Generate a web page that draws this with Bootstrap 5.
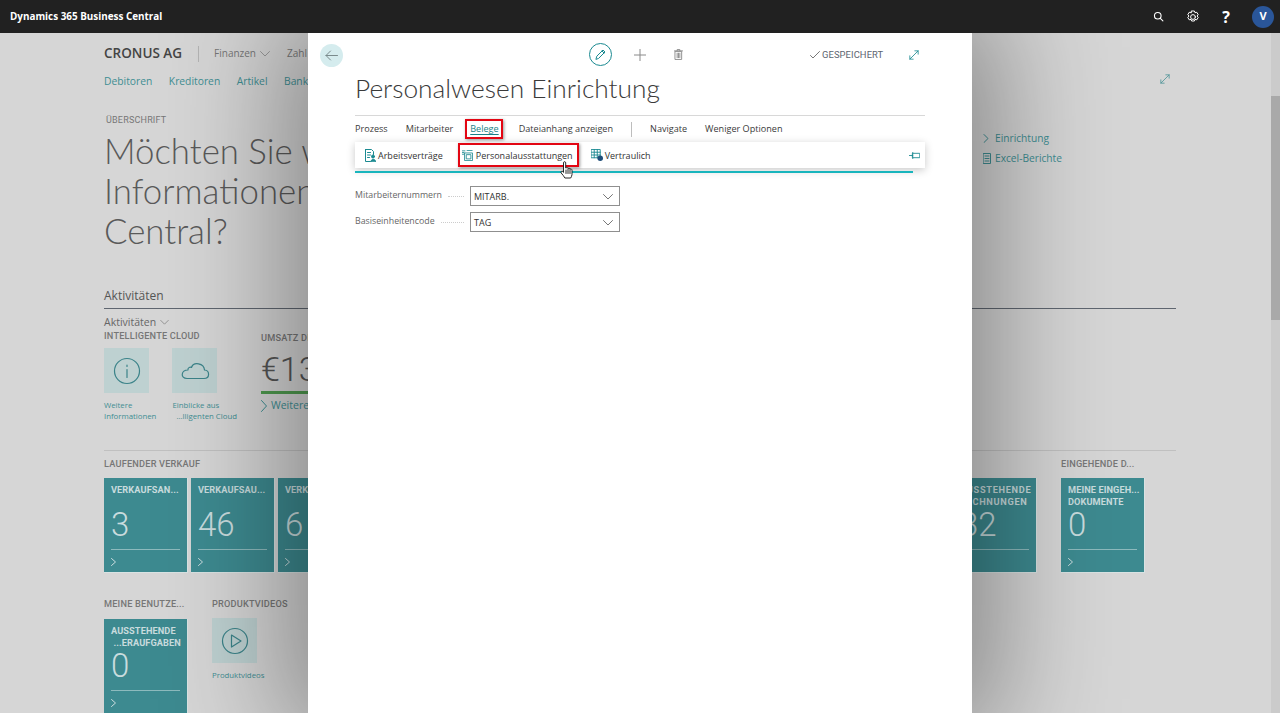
<!DOCTYPE html>
<html lang="de">
<head>
  <meta charset="UTF-8">
  <title>Personalwesen Einrichtung</title>
  <meta name="viewport" content="width=device-width, initial-scale=1">
  <link href="https://cdn.jsdelivr.net/npm/bootstrap@5.3.0/dist/css/bootstrap.min.css" rel="stylesheet">
  <style>
    html, body { height: 100%; overflow: hidden; }
    body { background: #d6d6d6; font-family: "Open Sans", "Liberation Sans", sans-serif; color: #4a4a4a; font-size: 10px; }
    svg { display: block; fill: none; stroke-linecap: round; stroke-linejoin: round; }

    .topbar { position: relative; z-index: 5; height: 33px; padding: 0 6px 0 10px; background: #212121; color: #fff; }
    .brand { font-size: 9.9px; font-weight: 700; }
    .top-icons { gap: 22px; }
    .avatar { width: 22px; height: 22px; border-radius: 50%; background: #2a5699; font-size: 11px; font-weight: 700; }

    .backdrop { height: 680px; padding-left: 104px; overflow: hidden; }
    .company-row { height: 40px; padding-top: 1px; }
    .company { font-size: 13.5px; font-weight: 600; color: #444; }
    .sep { width: 1px; height: 16px; background: #b4b4b4; margin: 0 15px 0 16px; }
    .menu-grey { font-size: 10px; color: #777; }
    .menu-next { margin-left: 17px; }
    .teal-links { height: 17px; font-size: 10.3px; color: #3f8e93; gap: 16.500px; margin-top: 1px; }
    .overline { margin: 23px 0 0 2px; font-family: Roboto, sans-serif; font-size: 9px; letter-spacing: .2px; color: #777; }
    .hero { margin: 3px 0 0; font-family: Lato, sans-serif; font-weight: 300; font-size: 34.8px; line-height: 40px; color: #5a5a5a; }
    .section-title { margin-top: 37px; width: 1072px; height: 21px; border-bottom: 1px solid #5f6670; font-size: 12px; color: #555; line-height: 16px; }
    .sub-title { margin-top: 7px; line-height: 13px; font-size: 10.5px; color: #666; }
    .cap { font-family: Roboto, sans-serif; font-weight: 500; font-size: 9.2px; color: #777; letter-spacing: .2px; }
    .cap-act { margin-bottom: 6px; }
    .act-row { height: 121px; }
    .act-left { width: 157px; }
    .act-gap { margin-left: 16px; }
    .act-box { width: 45px; height: 45px; background: #bed1d1; }
    .act-label { margin-top: 7px; font-size: 7.8px; line-height: 10.5px; color: #3f8e93; }
    .kpi-col { margin-top: 2px; }
    .kpi { margin-top: 6px; font-family: Roboto, sans-serif; font-size: 34px; font-weight: 300; line-height: 38px; color: #555; }
    .kpi-bar { margin-top: 3px; height: 3px; width: 60px; background: #4f9b4f; }
    .kpi-more { margin-top: 4px; font-size: 10.5px; font-weight: 500; color: #3f8e93; }

    .tile-rule { width: 1072px; border-top: 1px solid #c0c0c0; }
    .tile-row { width: 1041px; }
    .tile-cap { margin-top: 6px; margin-bottom: 8px; }
    .tile { width: 84px; height: 95px; padding: 6px 7px 0 7px; background: #3d8a90; color: #c9dcde; border: 1px solid #d9e3e3; border-width: 0 1px 1px 0; overflow: hidden; }
    .tile-name { height: 24px; font-family: Roboto, sans-serif; font-weight: 700; font-size: 9.2px; line-height: 12px; letter-spacing: .1px; white-space: nowrap; }
    .tile-wide { letter-spacing: .7px; }
    .tile-num { font-family: Roboto, sans-serif; font-weight: 300; font-size: 33px; line-height: 32px; height: 40px; margin-top: 1px; }
    .tile-line { height: 1px; background: #8dbabd; }
    .tile-arrow { margin-top: 8px; }
    .gap-tiles { gap: 3px; }
    .lower-row { margin-top: 24px; }
    .cap-lower { margin-bottom: 8px; }
    .cap-video { margin-bottom: 7px; }

    .scroll-track { position: absolute; top: 33px; right: 0; bottom: 0; width: 9px; background: #cbcbcb; }
    .scroll-thumb { position: absolute; top: 63px; left: 0; right: 0; height: 224px; background: #a9a9a9; }

    .side-link { position: absolute; left: 983px; font-size: 10.2px; color: #3f8e93; gap: 6px; }
    .side-one { top: 131px; }
    .side-two { top: 151px; gap: 4px; }
    .expand-bg { position: absolute; left: 1160px; top: 74px; }

    .sheet { position: absolute; left: 308px; top: 33px; width: 664px; bottom: 0; background: #fff; box-shadow: 0 0 110px 25px rgba(0,0,0,.38); padding: 0 47px; }
    .sheet-tools { height: 41px; }
    .round-btn { width: 23px; height: 23px; border-radius: 50%; }
    .back-btn { position: absolute; left: 12px; top: 11px; background: #d5ecee; }
    .edit-btn { border: 1px solid #1b8a91; position: absolute; left: 281px; top: 10px; }
    .tool-plus { position: absolute; left: 326px; top: 16px; }
    .tool-bin { position: absolute; left: 366px; top: 16px; }
    .saved { position: absolute; left: 502px; top: 15px; font-family: Roboto, sans-serif; font-size: 9.4px; letter-spacing: .1px; color: #5c6470; gap: 2px; }
    .tool-expand { position: absolute; left: 601px; top: 17px; }
    .sheet-title { margin: 0; font-family: Lato, sans-serif; font-weight: 300; font-size: 26.3px; line-height: 28px; height: 41px; color: #3a3a3a; }
    .ribbon { height: 27px; border-top: 1px solid #d8d8d8; font-size: 9.1px; color: #3a3a3a; }
    .ribbon-active { color: #1b7f86; text-decoration: underline; text-underline-offset: 2px; padding: 0 2px 0 3px; height: 20px; }
    .red-mark { border: 2px solid #e30613; box-shadow: 1px 1px 3px rgba(0,0,0,.4); }
    .ribbon-sep { width: 1px; height: 15px; background: #bdbdbd; margin: 0 18px; }
    .gap-18 { margin-left: 18px; }
    .gap-13 { margin-left: 12px; }
    .gap-16 { margin-left: 16px; }
    .subbar { height: 26px; background: #fff; box-shadow: 0 2px 8px rgba(0,0,0,.22); font-size: 9px; color: #333; padding: 0 5px 0 10px; }
    .sub-item { gap: 2px; height: 24px; }
    .sub-text { padding-top: 1px; }
    .sub-box { margin-left: 15px; padding: 0 4px 0 2px; gap: 3px; }
    .sub-last { margin-left: 12px; }
    .teal-rule { height: 2px; width: 558px; background: #19b5bd; margin-top: 3px; }
    .field-list { margin-top: 13px; }
    .field-row { height: 20px; margin-bottom: 6px; font-size: 8.8px; color: #666; }
    .field-label { width: 115px; display: flex; align-items: center; }
    .field-dots { flex: 1; border-bottom: 1px dotted #ccc; margin: 0 6px; height: 1px; }
    .field-box { width: 150px; height: 20px; border: 1px solid #8f8f8f; padding: 1px 6px 0 3px; color: #333; font-size: 9px; }
    .hand { position: absolute; left: 560px; top: 161px; }
  </style>
</head>
<body class="position-relative">

  <nav class="topbar d-flex align-items-center justify-content-between">
    <span class="brand">Dynamics 365 Business Central</span>
    <div class="top-icons d-flex align-items-center">
      <svg width="11" height="11" viewBox="0 0 12 12" stroke="#fff" stroke-width="1.2"><circle cx="5.2" cy="5.2" r="3.6"/><path d="M8 8l2.8 2.8"/></svg>
      <svg width="14" height="14" viewBox="0 0 14 14" stroke="#fff" stroke-width="1"><circle cx="7" cy="7" r="2.4"/><path d="M5.6 1h2.8l.6 1.7 1.8-.4 1.4 2.4-1.2 1.3 1.2 1.4-1.4 2.4-1.8-.4-.6 1.6H5.6L5 9.4l-1.8.4-1.4-2.4L3 6 1.8 4.7l1.4-2.4 1.8.4z"/></svg>
      <span class="fw-bold fs-6 lh-1 text-white">?</span>
      <span class="avatar d-flex align-items-center justify-content-center text-white">V</span>
    </div>
  </nav>

  <div class="backdrop">
    <div class="company-row d-flex align-items-center">
      <span class="company">CRONUS AG</span><span class="sep"></span>
      <span class="menu-grey d-flex align-items-center gap-1"><span>Finanzen</span>
        <svg width="10" height="6" viewBox="0 0 10 6" stroke="#999"><path d="M.5.5L5 5 9.500.5"/></svg></span>
      <span class="menu-grey menu-next">Zahl</span>
    </div>
    <div class="teal-links d-flex">
      <span>Debitoren</span><span>Kreditoren</span><span>Artikel</span><span>Bank</span>
    </div>
    <div class="overline">ÜBERSCHRIFT</div>
    <h1 class="hero">Möchten Sie w<br>Informationen<br>Central?</h1>
    <div class="section-title">Aktivitäten</div>
    <div class="sub-title d-flex align-items-center gap-1"><span>Aktivitäten</span>
      <svg width="9" height="5" viewBox="0 0 10 6" stroke="#888"><path d="M.5.5L5 5 9.500.5"/></svg></div>
    <div class="act-row d-flex">
      <div class="act-left">
        <div class="cap cap-act">INTELLIGENTE CLOUD</div>
        <div class="d-flex">
          <div>
            <div class="act-box d-flex align-items-center justify-content-center">
              <svg width="28" height="28" viewBox="0 0 28 28" stroke="#3b8389" stroke-width="1.2"><circle cx="14" cy="14" r="12.500"/><path d="M14 12.500v8M14 8v1.500"/></svg>
            </div>
            <div class="act-label">Weitere<br>Informationen</div>
          </div>
          <div class="act-gap">
            <div class="act-box d-flex align-items-center justify-content-center">
              <svg width="30" height="20" viewBox="0 0 30 20" stroke="#3b8389" stroke-width="1.2"><path d="M7 17.500h17c6 0 6-8 .5-8.500C24 2 13.500 .5 11.500 6.500 10 5.500 7.500 7 8 9 1 9 0 17.500 7 17.500z"/></svg>
            </div>
            <div class="act-label text-nowrap">Einblicke aus<br>&nbsp;&nbsp;...lligenten Cloud</div>
          </div>
        </div>
      </div>
      <div class="kpi-col">
        <div class="cap">UMSATZ DI</div>
        <div class="kpi">€13</div>
        <div class="kpi-bar"></div>
        <div class="kpi-more d-flex align-items-center gap-1">
          <svg width="6" height="12" viewBox="0 0 6 12" stroke="#3f8e93"><path d="M.5.5L5.500 6 .5 11.500"/></svg><span>Weitere</span></div>
      </div>
    </div>

    <div class="tile-rule"></div>
    <div class="tile-row d-flex">
      <div>
        <div class="cap tile-cap">LAUFENDER VERKAUF</div>
        <div class="d-flex gap-tiles">
          <div class="tile"><div class="tile-name">VERKAUFSAN...</div><div class="tile-num">3</div><div class="tile-line"></div><svg class="tile-arrow" width="5" height="8" viewBox="0 0 5 8" stroke="#c9dcde"><path d="M.5.500L4.500 4 .5 7.500"/></svg></div>
          <div class="tile"><div class="tile-name">VERKAUFSAU...</div><div class="tile-num">46</div><div class="tile-line"></div><svg class="tile-arrow" width="5" height="8" viewBox="0 0 5 8" stroke="#c9dcde"><path d="M.5.500L4.500 4 .5 7.500"/></svg></div>
          <div class="tile"><div class="tile-name">VERKAUFS...</div><div class="tile-num">6</div><div class="tile-line"></div><svg class="tile-arrow" width="5" height="8" viewBox="0 0 5 8" stroke="#c9dcde"><path d="M.5.500L4.500 4 .5 7.500"/></svg></div>
        </div>
      </div>
      <div class="ms-auto">
        <div class="cap tile-cap">&nbsp;</div>
        <div class="tile"><div class="tile-name tile-wide">AUSSTEHENDE<br>RECHNUNGEN</div><div class="tile-num">32</div><div class="tile-line"></div></div>
      </div>
      <div class="ms-4">
        <div class="cap tile-cap">EINGEHENDE D...</div>
        <div class="tile"><div class="tile-name">MEINE EINGEH...<br>DOKUMENTE</div><div class="tile-num">0</div><div class="tile-line"></div><svg class="tile-arrow" width="5" height="8" viewBox="0 0 5 8" stroke="#c9dcde"><path d="M.5.500L4.500 4 .5 7.500"/></svg></div>
      </div>
    </div>

    <div class="lower-row d-flex">
      <div>
        <div class="cap cap-lower">MEINE BENUTZE...</div>
        <div class="tile"><div class="tile-name">AUSSTEHENDE<br>&nbsp;...ERAUFGABEN</div><div class="tile-num">0</div><div class="tile-line"></div><svg class="tile-arrow" width="5" height="8" viewBox="0 0 5 8" stroke="#c9dcde"><path d="M.5.500L4.500 4 .5 7.500"/></svg></div>
      </div>
      <div class="ms-4">
        <div class="cap cap-video">PRODUKTVIDEOS</div>
        <div class="act-box d-flex align-items-center justify-content-center">
          <svg width="28" height="28" viewBox="0 0 28 28" stroke="#3b8389" stroke-width="1.2"><circle cx="14" cy="14" r="12.500"/><path d="M10.500 8l9.500 6-9.500 6z"/></svg>
        </div>
        <div class="act-label">Produktvideos</div>
      </div>
    </div>
  </div>

  <div class="side-link side-one d-flex align-items-center">
    <svg width="6" height="9" viewBox="0 0 6 9" stroke="#3f8e93"><path d="M1 .5L5 4.500 1 8.500"/></svg><span>Einrichtung</span></div>
  <div class="side-link side-two d-flex align-items-center">
    <svg width="8" height="11" viewBox="0 0 8 11" stroke="#3f8e93"><path d="M.5.500h7v10h-7zM2 3h4M2 5.500h4M2 8h4"/></svg><span>Excel-Berichte</span></div>
  <svg class="expand-bg" width="10" height="10" viewBox="0 0 12 12" stroke="#4f9599"><path d="M1 11L11 1M7 1h4v4M1 7v4h4"/></svg>

  <div class="scroll-track"><div class="scroll-thumb"></div></div>

  <section class="sheet">
    <div class="sheet-tools">
      <div class="round-btn back-btn d-flex align-items-center justify-content-center">
        <svg width="13" height="11" viewBox="0 0 13 11" stroke="#7a8a8c"><path d="M12.500 5.500H1M5.500 1L1 5.500 5.500 10"/></svg>
      </div>
      <div class="round-btn edit-btn d-flex align-items-center justify-content-center">
        <svg width="11" height="11" viewBox="0 0 11 11" stroke="#1b8a91"><path d="M1 10l.8-2.800L8 1l2 2-6.200 6.200zM7 2l2 2"/></svg>
      </div>
      <svg class="tool-plus" width="12" height="12" viewBox="0 0 12 12" stroke="#8a8a8a"><path d="M6 0v12M0 6h12"/></svg>
      <svg class="tool-bin" width="9" height="11" viewBox="0 0 10 12" stroke="#888"><path d="M3.500 1.500V.5h3v1M.5 2h9M1.500 2.500h7v9h-7zM3.500 4.500v5M5 4.500v5M6.500 4.500v5"/></svg>
      <div class="saved d-flex align-items-center">
        <svg width="10" height="8" viewBox="0 0 10 8" stroke="#777"><path d="M.5 4.500L3 7 9.500.5"/></svg><span>GESPEICHERT</span></div>
      <svg class="tool-expand" width="10" height="10" viewBox="0 0 12 12" stroke="#1b8a91"><path d="M1 11L11 1M7 1h4v4M1 7v4h4"/></svg>
    </div>
    <h2 class="sheet-title">Personalwesen Einrichtung</h2>
    <div class="ribbon d-flex align-items-center">
      <span>Prozess</span>
      <span class="gap-18">Mitarbeiter</span>
      <span class="red-mark ribbon-active d-flex align-items-center gap-13">Belege</span>
      <span class="gap-16">Dateianhang anzeigen</span>
      <span class="ribbon-sep"></span>
      <span>Navigate</span>
      <span class="gap-18">Weniger Optionen</span>
    </div>
    <div class="subbar d-flex align-items-center">
      <span class="sub-item d-flex align-items-center">
        <svg width="11" height="13" viewBox="0 0 11 13" stroke="#1b8a91"><path d="M.5.500h6l2 2v3M.5.500v12h5M2.500 3.500h3M2.500 6h3M2.500 8.500h2"/><circle cx="8" cy="7.500" r="1.500" fill="#1b8a91"/><path d="M6 12.500c0-3 4.500-3 4.500 0z" fill="#1b8a91"/></svg>
        <span class="sub-text">Arbeitsverträge</span></span>
      <span class="sub-item sub-box red-mark d-flex align-items-center">
        <svg width="11" height="11" viewBox="0 0 13 13" stroke="#1b8a91"><path d="M3.500 3.500h9v9h-9zM5.500 5.500h5v5h-5zM.5 1h3M.5 3h2M.5 5h2M6 .5h6"/></svg>
        <span class="sub-text">Personalausstattungen</span></span>
      <span class="sub-item sub-last d-flex align-items-center">
        <svg width="12" height="12" viewBox="0 0 13 13" stroke="#1b8a91"><path d="M.5.500h9.500v9H.5zM.5 3.500h9.500M3.500 .5v9M6.800 .5v9M.5 6.500h9.500"/><circle cx="10" cy="10" r="3" fill="#1f4e79" stroke="none"/></svg>
        <span class="sub-text">Vertraulich</span></span>
      <svg class="ms-auto" width="11" height="7" viewBox="0 0 12 8" stroke="#1b8a91"><path d="M0 4h4M4 1.500h8V6.500H4zM4 .5v7"/></svg>
    </div>
    <div class="teal-rule"></div>
    <div class="field-list">
      <div class="field-row d-flex align-items-center">
        <span class="field-label"><span>Mitarbeiternummern</span><span class="field-dots"></span></span>
        <div class="field-box d-flex align-items-center justify-content-between"><span>MITARB.</span>
          <svg width="10" height="6" viewBox="0 0 10 6" stroke="#777"><path d="M.5.500L5 5 9.500.5"/></svg></div>
      </div>
      <div class="field-row d-flex align-items-center">
        <span class="field-label"><span>Basiseinheitencode</span><span class="field-dots"></span></span>
        <div class="field-box d-flex align-items-center justify-content-between"><span>TAG</span>
          <svg width="10" height="6" viewBox="0 0 10 6" stroke="#777"><path d="M.5.500L5 5 9.500.5"/></svg></div>
      </div>
    </div>
  </section>

  <svg class="hand" width="13" height="19" viewBox="0 0 13 19" stroke="#111" stroke-width=".9"><path fill="#fff" d="M3.500 11V1.800c0-1.500 2.200-1.500 2.200 0V7l1-.3c.8-.2 1.300.2 1.400.6l.9-.1c.7 0 1.100.4 1.200.8 1-.2 1.800.3 1.800 1.200v4.300c0 1.500-.9 2.300-1.300 3.500H4.900c-.8-1.800-2.200-3-3.700-5-.8-1.300.6-2.600 1.700-1.500z"/><path d="M6 9v3.500M8 8v4.500M10 8.500v4"/></svg>

  <script src="https://cdn.jsdelivr.net/npm/bootstrap@5.3.0/dist/js/bootstrap.bundle.min.js"></script>
</body>
</html>
